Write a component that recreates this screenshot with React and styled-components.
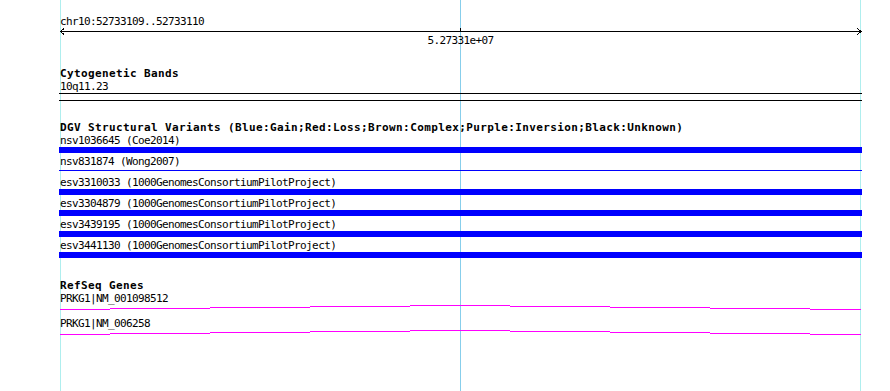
import React from 'react'
import styled, { createGlobalStyle } from 'styled-components'

const GlobalStyle = createGlobalStyle`
  html, body {
    margin: 0;
    padding: 0;
    background: #fff;
  }
  body {
    width: 890px;
    height: 391px;
    overflow: hidden;
  }
`

const variants = [
  { name: 'nsv1036645', source: 'Coe2014' },
  { name: 'nsv831874', source: 'Wong2007', thin: true },
  { name: 'esv3310033', source: '1000GenomesConsortiumPilotProject' },
  { name: 'esv3304879', source: '1000GenomesConsortiumPilotProject' },
  { name: 'esv3439195', source: '1000GenomesConsortiumPilotProject' },
  { name: 'esv3441130', source: '1000GenomesConsortiumPilotProject' },
]

const genes = ['PRKG1|NM_001098512', 'PRKG1|NM_006258']

// step heights of the transcript line, one per 100px segment
const steps = [4, 3, 2, 1, 0, 1, 2, 3, 4]
const stepEdges = [1, 51, 151, 251, 351, 451, 551, 651, 751, 802]

const genePath = steps
  .map((y, i) => `M${stepEdges[i]} ${y + 0.5}H${stepEdges[i + 1]}`)
  .join(' ')

const App = () => {
  return (
    <Canvas>
      <GlobalStyle />
      <GridLine $x={60} $color="#afeeee" />
      <GridLine $x={460} $color="#87ceeb" />
      <GridLine $x={860} $color="#afeeee" />

      <Tracks>
        <Label>chr10:52733109..52733110</Label>
        <RulerSvg width="803" height="5" viewBox="0 0 803 5">
          <path d="M1 3.5H802.5" stroke="#000" fill="none" />
          <path d="M5 0.5L1.5 3.5L5 6.5" stroke="#000" fill="none" />
          <path d="M798.5 0.5L802 3.5L798.5 6.5" stroke="#000" fill="none" />
          <path d="M401.5 0V3.5" stroke="#000" />
        </RulerSvg>
        <RulerLabel>5.27331e+07</RulerLabel>

        <Track $gap={20}>
          <TrackTitle>Cytogenetic Bands</TrackTitle>
          <Label>10q11.23</Label>
          <Band />
        </Track>

        <Track $gap={20}>
          <TrackTitle>
            DGV Structural Variants (Blue:Gain;Red:Loss;Brown:Complex;Purple:Inversion;Black:Unknown)
          </TrackTitle>
          {variants.map((v) => (
            <div key={v.name}>
              <Label>{v.name} ({v.source})</Label>
              <VariantBar $thin={v.thin} />
            </div>
          ))}
        </Track>

        <Track $gap={21}>
          <TrackTitle>RefSeq Genes</TrackTitle>
          {genes.map((g) => (
            <GeneRow key={g}>
              <Label>{g}</Label>
              <GeneSvg width="803" height="6" viewBox="0 0 803 6">
                <path d={genePath} stroke="#ff00ff" fill="none" />
              </GeneSvg>
            </GeneRow>
          ))}
        </Track>
      </Tracks>
    </Canvas>
  )
}

const Canvas = styled.div`
  position: relative;
  width: 890px;
  height: 391px;
  overflow: hidden;
  background: #fff;
  color: #000;
  font-family: "DejaVu Sans Mono", "Liberation Mono", monospace;
  font-size: 11px;
`

const GridLine = styled.div`
  position: absolute;
  top: 0;
  bottom: 0;
  left: ${(p) => p.$x}px;
  width: 1px;
  background: ${(p) => p.$color};
`

const Tracks = styled.div`
  position: relative;
  z-index: 1;
  width: 803px;
  margin-left: 59px;
  padding-top: 15px;
`

const Label = styled.div`
  height: 13px;
  line-height: 13px;
  padding-left: 1px;
  letter-spacing: -0.62px;
  white-space: nowrap;
`

const TrackTitle = styled(Label)`
  font-weight: bold;
  letter-spacing: 0.38px;
`

const RulerSvg = styled.svg`
  display: block;
  overflow: visible;
  shape-rendering: crispEdges;
`

const RulerLabel = styled.div`
  height: 12px;
  margin-top: 2px;
  line-height: 12px;
  text-align: center;
  letter-spacing: -0.62px;
`

const Track = styled.div`
  margin-top: ${(p) => p.$gap}px;
`

const Band = styled.div`
  box-sizing: border-box;
  height: 8px;
  border-top: 1px solid #000;
  border-bottom: 1px solid #000;
`

const VariantBar = styled.div`
  height: ${(p) => (p.$thin ? 1 : 6)}px;
  margin: ${(p) => (p.$thin ? '2px 0 5px' : '0 0 2px')};
  background: #0000ff;
`

const GeneRow = styled.div`
  margin-bottom: 6px;
`

const GeneSvg = styled.svg`
  display: block;
  shape-rendering: crispEdges;
`

export default App
